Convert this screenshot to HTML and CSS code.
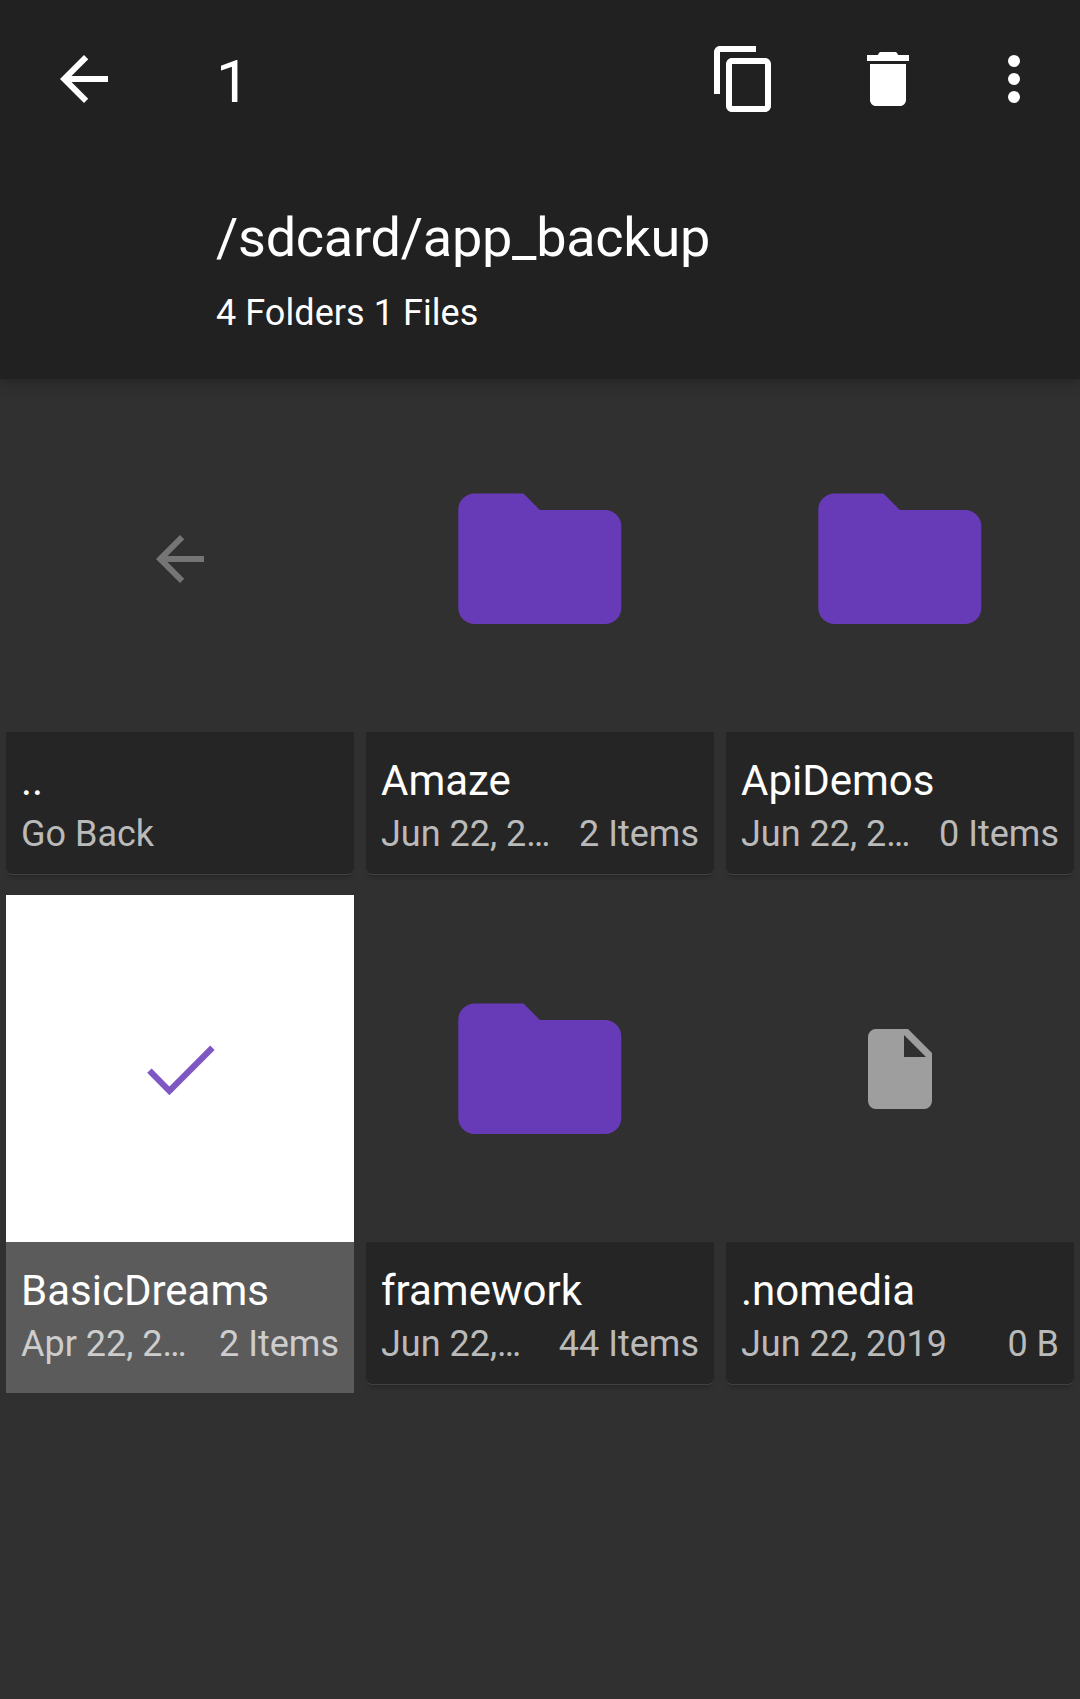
FILE: index.html
```html
<!DOCTYPE html>
<html lang="en">
<head>
<meta charset="utf-8">
<title>File manager</title>
<link rel="stylesheet" href="styles.css">
</head>
<body>
<svg class="defs" aria-hidden="true">
  <symbol id="arrow" viewBox="0 0 24 24"><path d="M20 11H7.83l5.59-5.59L12 4l-8 8 8 8 1.41-1.41L7.83 13H20z"/></symbol>
  <symbol id="folder" viewBox="0 0 24 24"><path d="M10 4H4a2 2 0 0 0-2 2v12a2 2 0 0 0 2 2h16a2 2 0 0 0 2-2V8a2 2 0 0 0-2-2h-8z"/></symbol>
</svg>
<header class="header">
  <div class="toolbar">
    <svg class="icon"><use href="#arrow"/></svg>
    <span class="count">1</span>
    <div class="actions">
      <svg class="icon" viewBox="0 0 24 24"><path d="M16 1H4c-1.1 0-2 .9-2 2v14h2V3h12zm3 4H8c-1.1 0-2 .9-2 2v14c0 1.1.9 2 2 2h11c1.1 0 2-.9 2-2V7c0-1.1-.9-2-2-2zm0 16H8V7h11z"/></svg>
      <svg class="icon" viewBox="0 0 24 24"><path d="M6 19c0 1.1.9 2 2 2h8c1.1 0 2-.9 2-2V7H6zM19 4h-3.6L15 3.3Q14.8 3 14.4 3H9.6Q9.2 3 9 3.3L8.6 4H5v2h14z"/></svg>
      <svg class="icon more" viewBox="0 0 24 24"><circle cx="12" cy="6" r="2"/><circle cx="12" cy="12" r="2"/><circle cx="12" cy="18" r="2"/></svg>
    </div>
  </div>
  <div class="location">
    <h1 class="path">/sdcard/app_backup</h1>
    <p class="summary">4 Folders 1 Files</p>
  </div>
</header>
<main class="grid">
  <article class="item">
    <div class="thumb"><svg class="icon back"><use href="#arrow"/></svg></div>
    <div class="caption"><h2 class="name">..</h2><div class="meta"><span>Go Back</span></div></div>
  </article>
  <article class="item">
    <div class="thumb"><svg class="folder"><use href="#folder"/></svg></div>
    <div class="caption"><h2 class="name">Amaze</h2><div class="meta"><span>Jun 22, 2…</span><span>2 Items</span></div></div>
  </article>
  <article class="item">
    <div class="thumb"><svg class="folder"><use href="#folder"/></svg></div>
    <div class="caption"><h2 class="name">ApiDemos</h2><div class="meta"><span>Jun 22, 2…</span><span>0 Items</span></div></div>
  </article>
  <article class="item selected">
    <div class="thumb"><svg class="check" viewBox="0 0 100 100"><path d="M19.4 51.6 39.4 71.9 82.4 28.7"/></svg></div>
    <div class="caption"><h2 class="name">BasicDreams</h2><div class="meta"><span>Apr 22, 2…</span><span>2 Items</span></div></div>
  </article>
  <article class="item">
    <div class="thumb"><svg class="folder"><use href="#folder"/></svg></div>
    <div class="caption"><h2 class="name">framework</h2><div class="meta"><span>Jun 22,…</span><span>44 Items</span></div></div>
  </article>
  <article class="item">
    <div class="thumb"><svg class="file" viewBox="0 0 24 24"><path d="M6 2a2 2 0 0 0-2 2v16a2 2 0 0 0 2 2h12a2 2 0 0 0 2-2V8l-6-6zm7 7V3.5L18.5 9z"/></svg></div>
    <div class="caption"><h2 class="name">.nomedia</h2><div class="meta"><span>Jun 22, 2019</span><span>0 B</span></div></div>
  </article>
</main>
</body>
</html>
```
FILE: styles.css
```css
* { box-sizing: border-box; }
body {
  margin: 0;
  min-height: 1699px;
  background: #303030;
  color: #fff;
  font-family: Roboto, sans-serif;
}
h1, h2, p { margin: 0; font-weight: 400; white-space: nowrap; }
svg { display: block; fill: currentColor; flex: none; }
.defs { position: absolute; width: 0; height: 0; }
.header {
  height: 379px;
  background: #212121;
  box-shadow: 0 2px 14px rgba(0, 0, 0, .28);
}
.toolbar {
  display: flex;
  align-items: center;
  height: 158px;
  padding: 0 30px 0 48px;
}
.icon { width: 72px; height: 72px; }
.count { margin-left: 96px; padding-top: 5px; font-size: 60px; line-height: 70px; }
.actions { display: flex; gap: 72px; margin-left: auto; }
.more { margin-left: -18px; }
.location { padding: 47px 0 0 216px; }
.path { font-size: 54px; line-height: 66px; letter-spacing: -.25px; }
.summary { margin-top: 19px; font-size: 36px; line-height: 46px; letter-spacing: .06px; }
.grid {
  display: grid;
  grid-template-columns: repeat(3, 348px);
  gap: 21px 12px;
  padding: 6px;
}
.item { height: 489px; }
.thumb {
  display: flex;
  align-items: center;
  justify-content: center;
  height: 347px;
}
.folder { width: 195.6px; height: 195.6px; color: #673ab7; }
.file { width: 96px; height: 96px; color: #9e9e9e; }
.back { color: #757575; }
.check { width: 100px; height: 100px; fill: none; stroke: #7e57c2; stroke-width: 6.2; }
.caption {
  height: 142px;
  padding: 25px 15px 0;
  border-radius: 0 0 6px 6px;
  background: #252525;
  box-shadow: 0 1px 0 #424242, 0 5px 5px -3px rgba(0, 0, 0, .3);
}
.name { font-size: 42px; line-height: 48px; }
.meta {
  display: flex;
  justify-content: space-between;
  margin-top: 8px;
  color: #bababa;
  font-size: 36px;
  line-height: 42px;
  white-space: nowrap;
}
.selected .thumb { background: #fff; }
.selected .caption {
  height: 151px;
  border-radius: 0;
  background: #5b5b5b;
  box-shadow: none;
}
.selected .meta { color: #cdcdcd; }
```
